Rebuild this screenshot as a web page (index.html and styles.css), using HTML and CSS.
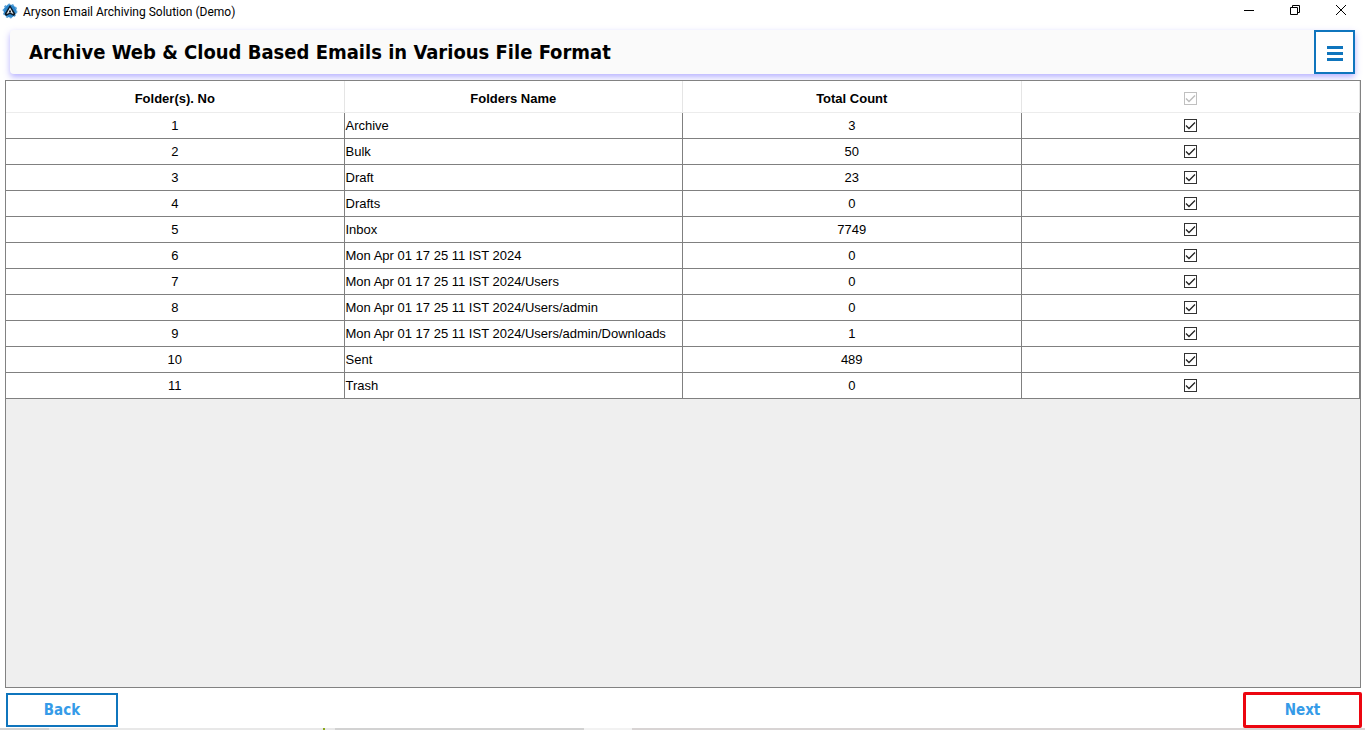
FILE: index.html
```html
<!DOCTYPE html>
<html lang="en">
<head>
    <meta charset="UTF-8">
    <meta name="viewport" content="width=device-width, initial-scale=1.0">
    <title>Aryson Email Archiving Solution (Demo)</title>
    <link rel="stylesheet" href="styles.css">
</head>
<body>
    <div class="titlebar">
        <svg class="logo" viewBox="0 0 16 16" aria-hidden="true">
            <circle cx="8" cy="8" r="6.5" fill="#2c86cc"/>
            <circle cx="8" cy="8" r="6.6" fill="none" stroke="#5aa2d8" stroke-width="1.6" stroke-dasharray="2.2 1.9"/>
            <path d="M8 2 13.5 11 12 13 8 11 4 13 2.5 11Z" fill="#0c1a28"/>
            <path d="M8 4.5 11.5 11 8 9.4 4.5 11Z" fill="#fff"/>
            <path d="M8 6.5 9.5 9.5H6.5Z" fill="#0c1a28"/>
        </svg>
        <span class="window-title">Aryson Email Archiving Solution (Demo)</span>
        <div class="window-buttons">
            <button class="window-button" aria-label="Minimize">
                <svg width="12" height="12" viewBox="0 0 12 12"><path d="M1 6.5H11" /></svg>
            </button>
            <button class="window-button" aria-label="Restore">
                <svg width="12" height="12" viewBox="0 0 12 12"><path d="M1.5 3.5h7v7h-7zM3.5 3.5v-2h7v7h-2" /></svg>
            </button>
            <button class="window-button" aria-label="Close">
                <svg width="12" height="12" viewBox="0 0 12 12"><path d="M1 1 11 11M11 1 1 11" /></svg>
            </button>
        </div>
    </div>

    <div class="header">
        <h1>Archive Web &amp; Cloud Based Emails in Various File Format</h1>
        <button class="menu" aria-label="Menu">
            <span></span>
            <span></span>
            <span></span>
        </button>
    </div>

    <div class="table-panel">
        <table class="folders">
            <thead>
                <tr>
                    <th>Folder(s). No</th>
                    <th>Folders Name</th>
                    <th>Total Count</th>
                    <th><input type="checkbox" aria-label="Select all folders" checked disabled></th>
                </tr>
            </thead>
            <tbody>
                <tr><td>1</td><td class="name">Archive</td><td>3</td><td><input type="checkbox" aria-label="Archive" checked></td></tr>
                <tr><td>2</td><td class="name">Bulk</td><td>50</td><td><input type="checkbox" aria-label="Bulk" checked></td></tr>
                <tr><td>3</td><td class="name">Draft</td><td>23</td><td><input type="checkbox" aria-label="Draft" checked></td></tr>
                <tr><td>4</td><td class="name">Drafts</td><td>0</td><td><input type="checkbox" aria-label="Drafts" checked></td></tr>
                <tr><td>5</td><td class="name">Inbox</td><td>7749</td><td><input type="checkbox" aria-label="Inbox" checked></td></tr>
                <tr><td>6</td><td class="name">Mon Apr 01 17 25 11 IST 2024</td><td>0</td><td><input type="checkbox" aria-label="Mon Apr 01 17 25 11 IST 2024" checked></td></tr>
                <tr><td>7</td><td class="name">Mon Apr 01 17 25 11 IST 2024/Users</td><td>0</td><td><input type="checkbox" aria-label="Mon Apr 01 17 25 11 IST 2024/Users" checked></td></tr>
                <tr><td>8</td><td class="name">Mon Apr 01 17 25 11 IST 2024/Users/admin</td><td>0</td><td><input type="checkbox" aria-label="Mon Apr 01 17 25 11 IST 2024/Users/admin" checked></td></tr>
                <tr><td>9</td><td class="name">Mon Apr 01 17 25 11 IST 2024/Users/admin/Downloads</td><td>1</td><td><input type="checkbox" aria-label="Mon Apr 01 17 25 11 IST 2024/Users/admin/Downloads" checked></td></tr>
                <tr><td>10</td><td class="name">Sent</td><td>489</td><td><input type="checkbox" aria-label="Sent" checked></td></tr>
                <tr><td>11</td><td class="name">Trash</td><td>0</td><td><input type="checkbox" aria-label="Trash" checked></td></tr>
            </tbody>
        </table>
    </div>

    <div class="footer">
        <button class="nav-button">Back</button>
        <button class="nav-button next">Next</button>
    </div>
    <div class="bottom-edge"></div>
</body>
</html>
```

FILE: styles.css
```css
* {
    box-sizing: border-box;
}

body {
    display: flex;
    flex-direction: column;
    height: 100vh;
    margin: 0;
    background-color: #fff;
    color: #000;
    font-family: "Liberation Sans", Arial, sans-serif;
    font-size: 13px;
}

button {
    padding: 0;
    background-color: #fff;
    border: none;
    cursor: pointer;
}

.titlebar {
    display: flex;
    align-items: center;
    height: 24px;
    padding-left: 2px;
    margin-bottom: 6px;
}

.logo {
    width: 16px;
    height: 16px;
    margin: 0 5px 2px 0;
}

.window-title {
    font-family: Roboto, sans-serif;
    font-size: 12px;
}

.window-buttons {
    display: flex;
    height: 20px;
    margin: 0 1px 4px auto;
}

.window-button {
    display: flex;
    justify-content: center;
    align-items: center;
    width: 46px;
}

.window-button svg {
    fill: none;
    stroke: #000;
}

.header {
    display: flex;
    justify-content: space-between;
    align-items: center;
    height: 44px;
    padding-left: 19px;
    margin: 0 10px 6px;
    background-color: #fafafa;
    border-radius: 4px;
    box-shadow: 0 3px 6px rgba(110, 100, 255, 0.5);
}

.header h1 {
    margin: 0;
    font-family: "DejaVu Sans Condensed", "DejaVu Sans", sans-serif;
    font-size: 20px;
    font-weight: bold;
}

.menu {
    display: flex;
    flex-direction: column;
    justify-content: center;
    align-items: center;
    gap: 3px;
    width: 41px;
    height: 44px;
    padding-top: 2px;
    border: 2px solid #0f75bd;
}

.menu span {
    width: 16px;
    height: 3px;
    background-color: #0f75bd;
}

.table-panel {
    flex: 1;
    margin: 0 4px 0 5px;
    background-color: #efefef;
    border: 1px solid #828282;
    overflow: auto;
}

.folders {
    width: 100%;
    table-layout: fixed;
    border-spacing: 0;
    background-color: #fff;
}

.folders th {
    height: 32px;
    padding: 3px 0 0;
    border-right: 1px solid #e5e5e5;
    border-bottom: 1px solid #ececec;
}

.folders td {
    height: 26px;
    padding: 0;
    border-right: 1px solid #808080;
    border-bottom: 1px solid #808080;
    text-align: center;
}

.folders .name {
    padding-left: 1px;
    text-align: left;
}

.folders input {
    display: block;
    appearance: none;
    width: 13px;
    height: 13px;
    margin: 0 auto;
    border: 1px solid #333;
    background-color: #fff;
}

.folders input:checked {
    background-image: url("data:image/svg+xml,%3Csvg xmlns='http://www.w3.org/2000/svg' viewBox='0 0 11 11'%3E%3Cpath d='M1 5.5 4 8.5 10 2.5' fill='none' stroke='%23222' stroke-width='1.3'/%3E%3C/svg%3E");
}

.folders input:disabled {
    opacity: 0.3;
}

.footer {
    display: flex;
    justify-content: space-between;
    align-items: center;
    height: 40px;
    padding: 4px 3px 0 6px;
}

.nav-button {
    width: 112px;
    height: 34px;
    border: 2px solid #0f75bd;
    color: #359be8;
    font-family: "DejaVu Sans Condensed", "DejaVu Sans", sans-serif;
    font-size: 15px;
    font-weight: bold;
}

.nav-button.next {
    width: 119px;
    height: 36px;
    border: 3px solid #ec0610;
    border-radius: 2px;
}

.bottom-edge {
    height: 2px;
    background: linear-gradient(to right, #d2d2d2 49px, #e8e8e8 49px 323px, #8aa81c 323px 325px, #e8e8e8 325px 335px, #d2d2d2 335px 584px, #f2f2f2 584px 632px, #d8d4d4 632px);
}
```
